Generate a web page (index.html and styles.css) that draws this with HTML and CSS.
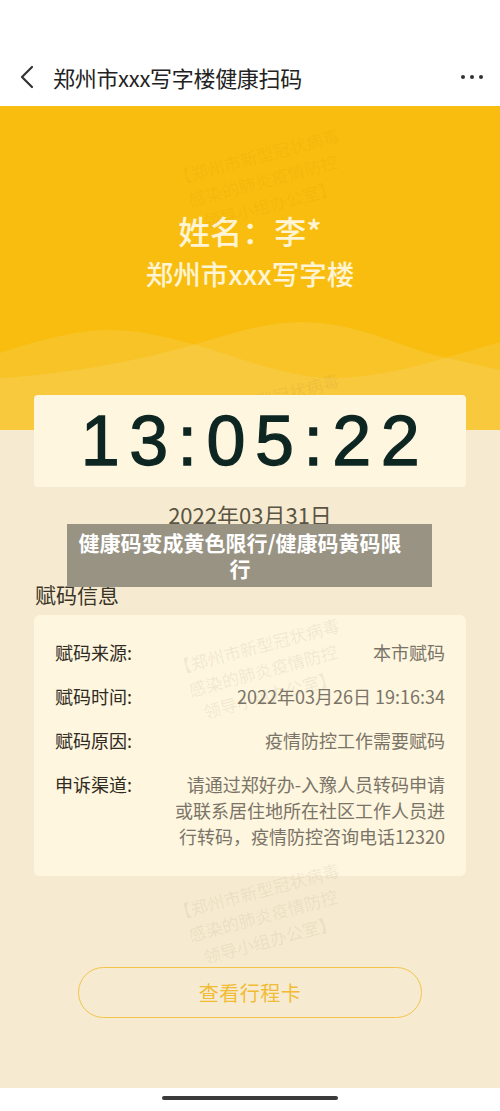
FILE: index.html
```html
<!DOCTYPE html>
<html lang="zh-CN">
<head>
<meta charset="utf-8">
<title>郑州市xxx写字楼健康扫码</title>
<link rel="stylesheet" href="styles.css">
</head>
<body>
<div class="page">
  <header class="topbar">
    <svg class="back" width="14" height="24" viewBox="0 0 14 24"><polyline points="12,2 2,12 12,22" fill="none" stroke="#333" stroke-width="2.2" stroke-linecap="round" stroke-linejoin="round"/></svg>
    <h1 class="title">郑州市xxx写字楼健康扫码</h1>
    <div class="more"><span></span><span></span><span></span></div>
  </header>

  <section class="hero">
    <div class="name">姓名：李*</div>
    <div class="place">郑州市xxx写字楼</div>
    <svg class="waves" viewBox="0 0 500 110" preserveAspectRatio="none">
      <path d="M0,33 C45,18 80,10 110,10 C140,10 165,17 193,24 C240,38 290,58 333,58 C390,58 450,36 500,22 V110 H0 Z" fill="rgba(255,255,255,0.1)"/>
      <path d="M0,58 C70,54 140,40 193,25 C230,14 265,2 300,2 C360,2 400,28 447,38 C470,43 490,48 500,50 V110 H0 Z" fill="rgba(255,255,255,0.11)"/>
    </svg>
  </section>

  <main class="content">
    <div class="clock">13:05:22</div>
    <div class="date">2022年03月31日</div>
    <h2 class="section-title">赋码信息</h2>
    <div class="info-card">
      <div class="row"><span class="label">赋码来源:</span><span class="value">本市赋码</span></div>
      <div class="row"><span class="label">赋码时间:</span><span class="value">2022年03月26日 19:16:34</span></div>
      <div class="row"><span class="label">赋码原因:</span><span class="value">疫情防控工作需要赋码</span></div>
      <div class="row"><span class="label">申诉渠道:</span><span class="value wrap">请通过郑好办-入豫人员转码申请或联系居住地所在社区工作人员进行转码，疫情防控咨询电话12320</span></div>
    </div>
    <button class="trip-btn">查看行程卡</button>
  </main>

  <footer class="home-bar"><span></span></footer>

  <div class="watermarks">
    <div class="wm wm1">【郑州市新型冠状病毒<br>感染的肺炎疫情防控<br>领导小组办公室】</div>
    <div class="wm wm2">【郑州市新型冠状病毒<br>感染的肺炎疫情防控<br>领导小组办公室】</div>
    <div class="wm wm3">【郑州市新型冠状病毒<br>感染的肺炎疫情防控<br>领导小组办公室】</div>
    <div class="wm wm4">【郑州市新型冠状病毒<br>感染的肺炎疫情防控<br>领导小组办公室】</div>
  </div>

  <div class="caption">健康码变成黄色限行/健康码黄码限行</div>
</div>
</body>
</html>
```

FILE: styles.css
```css
* { box-sizing: border-box; }
html, body { margin: 0; padding: 0; background: #fff; }
body {
  font-family: "Noto Sans CJK SC", "Noto Sans", sans-serif;
  width: 500px;
  height: 1111px;
  overflow: hidden;
}
.page { position: relative; width: 500px; }

.topbar {
  height: 106px;
  padding: 55px 17px 7px 20px;
  display: flex;
  align-items: center;
  background: #fff;
}
.back { display: block; flex: none; }
.title {
  margin: 0 0 0 19px;
  font-size: 22px;
  font-weight: 400;
  color: #222;
  letter-spacing: -0.3px;
  flex: 1;
}
.more { display: flex; gap: 5px; }
.more span { width: 4px; height: 4px; border-radius: 50%; background: #333; }

.hero {
  height: 324px;
  background: #F8BD0E;
  display: flex;
  flex-direction: column;
  align-items: center;
  padding-top: 104px;
}
.name {
  font-size: 32px;
  line-height: 40px;
  font-weight: 500;
  color: #FFF4D4;
}
.place {
  margin-top: 6px;
  font-size: 27.5px;
  line-height: 34px;
  font-weight: 500;
  color: #FFF4D4;
}
.waves {
  display: block;
  margin-top: auto;
  width: 500px;
  height: 110px;
}

.content {
  background: #F6EBD0;
  padding: 0 34px 70px;
  display: flex;
  flex-direction: column;
}
.clock {
  position: relative;
  z-index: 2;
  margin-top: -35px;
  height: 92px;
  background: #FEF6DF;
  border-radius: 4px;
  display: flex;
  align-items: center;
  justify-content: center;
  font-family: "Liberation Sans", Arial, sans-serif;
  font-size: 70px;
  line-height: 1;
  letter-spacing: 9.5px;
  padding-left: 10px;
  color: #0D2622;
  -webkit-text-stroke: 1.3px #0D2622;
}
.date {
  margin-top: 12px;
  text-align: center;
  font-size: 22px;
  line-height: 30px;
  color: #5A5444;
}
.section-title {
  margin: 50px 0 0 1px;
  font-size: 21px;
  font-weight: 400;
  line-height: 30px;
  color: #3A3428;
}
.info-card {
  margin-top: 6px;
  background: #FEF6DF;
  border-radius: 6px;
  padding: 24px 21px 27px;
  display: flex;
  flex-direction: column;
  gap: 18px;
}
.row {
  display: flex;
  justify-content: space-between;
  align-items: flex-start;
  font-size: 18px;
  line-height: 26px;
}
.label { color: #2F2A22; flex: none; }
.value { color: #7A7468; text-align: right; }
.value.wrap { width: 272px; }

.trip-btn {
  margin: 91px 44px 0;
  height: 51px;
  border: 1.5px solid #F3C44C;
  border-radius: 26px;
  background: transparent;
  font-family: "Noto Sans CJK SC", sans-serif;
  font-size: 20px;
  color: #F2BB36;
  letter-spacing: 0.5px;
}

.home-bar {
  height: 20px;
  background: #fff;
  display: flex;
  justify-content: center;
  padding-top: 8px;
}
.home-bar span {
  width: 176px;
  height: 4px;
  border-radius: 2px;
  background: #3A3A3A;
}

.watermarks {
  position: absolute;
  inset: 0;
  z-index: 1;
  pointer-events: none;
}
.wm {
  position: absolute;
  left: 263px;
  width: 200px;
  transform: translate(-50%, -50%) rotate(-15deg);
  text-align: center;
  font-size: 17px;
  line-height: 25px;
  color: rgba(120, 100, 70, 0.1);
  white-space: nowrap;
}
.wm1 { top: 180px; color: rgba(200, 130, 20, 0.11); }
.wm2 { top: 425px; }
.wm3 { top: 670px; }
.wm4 { top: 915px; }

.caption {
  position: absolute;
  z-index: 3;
  left: 67px;
  top: 524px;
  width: 365px;
  height: 63px;
  padding: 5px 29px 0 10px;
  background: #999383;
  color: #fff;
  font-weight: 700;
  font-size: 21px;
  line-height: 26px;
  text-align: center;
}
```
